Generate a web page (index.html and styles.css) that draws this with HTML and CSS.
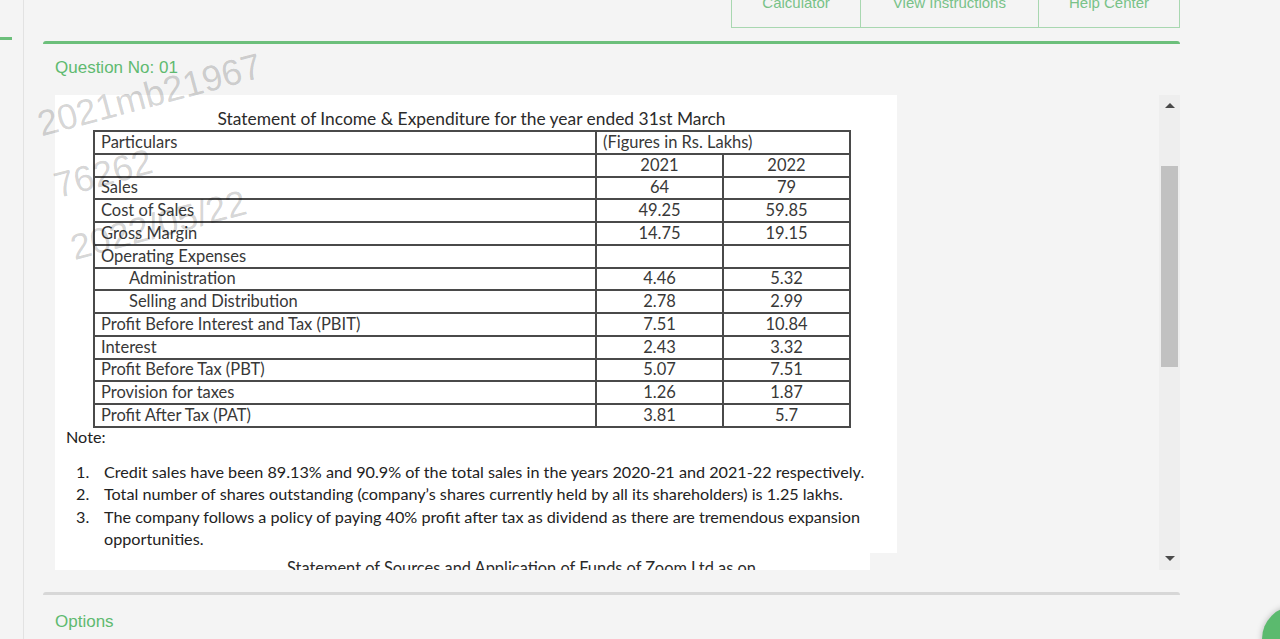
FILE: index.html
```html
<!DOCTYPE html>
<html lang="en">
<head>
<meta charset="utf-8">
<title>Question No: 01</title>
<link rel="stylesheet" href="styles.css">
</head>
<body>
<div class="page">
  <aside class="sidebar"><div class="sidebar-mark"></div></aside>
  <main class="main">
    <nav class="toolbar">
      <button class="tool-btn">Calculator</button>
      <button class="tool-btn tool-wide">View Instructions</button>
      <button class="tool-btn">Help Center</button>
    </nav>
    <section class="panel question-panel">
      <h2 class="panel-title">Question No: 01</h2>
      <div class="scroll-box">
        <div class="scroll-content">
          <div class="sheet sheet-income">
            <div class="statement">
              <div class="statement-title">Statement of Income &amp; Expenditure for the year ended 31st March</div>
              <table class="fin-table">
                <colgroup><col class="col-label"><col class="col-year"><col class="col-year"></colgroup>
                <tr><td>Particulars</td><td colspan="2">(Figures in Rs. Lakhs)</td></tr>
                <tr><td></td><td class="num">2021</td><td class="num">2022</td></tr>
                <tr><td>Sales</td><td class="num">64</td><td class="num">79</td></tr>
                <tr><td>Cost of Sales</td><td class="num">49.25</td><td class="num">59.85</td></tr>
                <tr><td>Gross Margin</td><td class="num">14.75</td><td class="num">19.15</td></tr>
                <tr><td>Operating Expenses</td><td></td><td></td></tr>
                <tr><td class="indent">Administration</td><td class="num">4.46</td><td class="num">5.32</td></tr>
                <tr><td class="indent">Selling and Distribution</td><td class="num">2.78</td><td class="num">2.99</td></tr>
                <tr><td>Profit Before Interest and Tax (PBIT)</td><td class="num">7.51</td><td class="num">10.84</td></tr>
                <tr><td>Interest</td><td class="num">2.43</td><td class="num">3.32</td></tr>
                <tr><td>Profit Before Tax (PBT)</td><td class="num">5.07</td><td class="num">7.51</td></tr>
                <tr><td>Provision for taxes</td><td class="num">1.26</td><td class="num">1.87</td></tr>
                <tr><td>Profit After Tax (PAT)</td><td class="num">3.81</td><td class="num">5.7</td></tr>
              </table>
            </div>
            <p class="note-label">Note:</p>
            <ol class="notes">
              <li>Credit sales have been 89.13% and 90.9% of the total sales in the years 2020-21 and 2021-22 respectively.</li>
              <li>Total number of shares outstanding (company’s shares currently held by all its shareholders) is 1.25 lakhs.</li>
              <li>The company follows a policy of paying 40% profit after tax as dividend as there are tremendous expansion opportunities.</li>
            </ol>
          </div>
          <div class="sheet sheet-funds">
            <div class="funds-title">Statement of Sources and Application of Funds of Zoom Ltd as on</div>
          </div>
        </div>
        <div class="scrollbar">
          <span class="sb-arrow sb-up"></span>
          <span class="sb-thumb"></span>
          <span class="sb-arrow sb-down"></span>
        </div>
      </div>
    </section>
    <section class="panel options-panel">
      <h2 class="panel-title">Options</h2>
    </section>
  </main>
</div>
<div class="watermark">2021mb21967<br>76262<br>2022/05/22</div>
<div class="fab"></div>
</body>
</html>
```

FILE: styles.css
```css
* { box-sizing: border-box; }
html, body { margin: 0; padding: 0; }
body {
  background: #f4f4f4;
  font-family: "Liberation Sans", Arial, sans-serif;
  height: 639px;
  overflow: hidden;
}
.page { display: flex; min-height: 639px; }
.sidebar {
  width: 24px;
  flex: none;
  border-right: 1px solid #e2e2e2;
  padding-top: 37px;
}
.sidebar-mark { width: 12px; height: 3px; background: #6cbf7b; }
.main { margin-left: 19px; width: 1137px; flex: none; }

.toolbar { display: flex; justify-content: flex-end; margin-top: -7px; }
.tool-btn {
  font: 15px/20px "Liberation Sans", Arial, sans-serif;
  color: #78c288;
  background: transparent;
  border: 1px solid #a8d7b0;
  border-top: none;
  border-right: none;
  padding: 0 30px 14px;
  margin: 0;
}
.tool-wide { padding-left: 32px; padding-right: 32px; }
.tool-btn:last-child { border-right: 1px solid #a8d7b0; }

.panel { padding: 14px 0 0 12px; border-top: 3px solid #6cbf7b; border-radius: 3px 3px 0 0; }
.question-panel { margin-top: 13px; }
.options-panel { margin-top: 22px; border-top-color: #d7d7d7; padding-top: 17px; }
.panel-title {
  margin: 0;
  font: normal 17px/20px "Liberation Sans", Arial, sans-serif;
  color: #5fba70;
}

.scroll-box { display: flex; height: 475px; margin-top: 17px; }
.scroll-content { flex: 1; overflow: hidden; }
.scrollbar {
  width: 21px;
  flex: none;
  background: #eeeeee;
  display: flex;
  flex-direction: column;
  align-items: center;
  padding: 8px 0 9px;
}
.sb-arrow { width: 0; height: 0; border-left: 5px solid transparent; border-right: 5px solid transparent; }
.sb-up { border-bottom: 5px solid #4a4a4a; }
.sb-down { border-top: 5px solid #4a4a4a; margin-top: auto; }
.sb-thumb { width: 17px; height: 201px; margin-top: 58px; background: #c1c1c1; }

.sheet { background: #fff; font-family: Lato, "Open Sans", sans-serif; color: #383838; }
.sheet-income { width: 842px; height: 458px; padding: 12px 7px 0 11px; }
.sheet-funds { width: 815px; height: 60px; padding: 4px 0 0 118px; }
.statement { margin-left: 27px; width: 757px; }
.statement-title { text-align: center; font-size: 17.4px; line-height: 23px; color: #2b2b2b; }
.funds-title { text-align: center; font-size: 16.4px; line-height: 22px; color: #2b2b2b; }

.fin-table { border-collapse: collapse; table-layout: fixed; width: 757px; font-size: 16.5px; }
.col-label { width: 502px; }
.col-year { width: 127px; }
.fin-table tr { height: 22.75px; }
.fin-table td { border: 2px solid #4a4a4a; padding: 0 6px; line-height: 19px; white-space: nowrap; }
.fin-table td.num { text-align: center; }
.fin-table td.indent { padding-left: 34px; }

.note-label { margin: -2px 0 0; font-size: 16.2px; line-height: 22px; color: #222; }
.notes { margin: 13px 0 0 10px; padding: 0; list-style: none; counter-reset: note; font-size: 16.2px; line-height: 22.5px; color: #222; }
.notes li { display: flex; counter-increment: note; }
.notes li::before { content: counter(note) "."; flex: none; width: 28px; }

.watermark {
  position: absolute;
  left: 30px;
  top: 94px;
  font: 36px/64px "Liberation Sans", Arial, sans-serif;
  color: rgba(0, 0, 0, 0.18);
  transform: rotate(-15deg);
  transform-origin: 0 0;
  white-space: nowrap;
  pointer-events: none;
}
.fab {
  position: fixed;
  left: 1262px;
  top: 606px;
  width: 66px;
  height: 66px;
  border-radius: 50%;
  background: #5bba6e;
  box-shadow: 0 0 6px rgba(0, 0, 0, 0.25);
}
```
